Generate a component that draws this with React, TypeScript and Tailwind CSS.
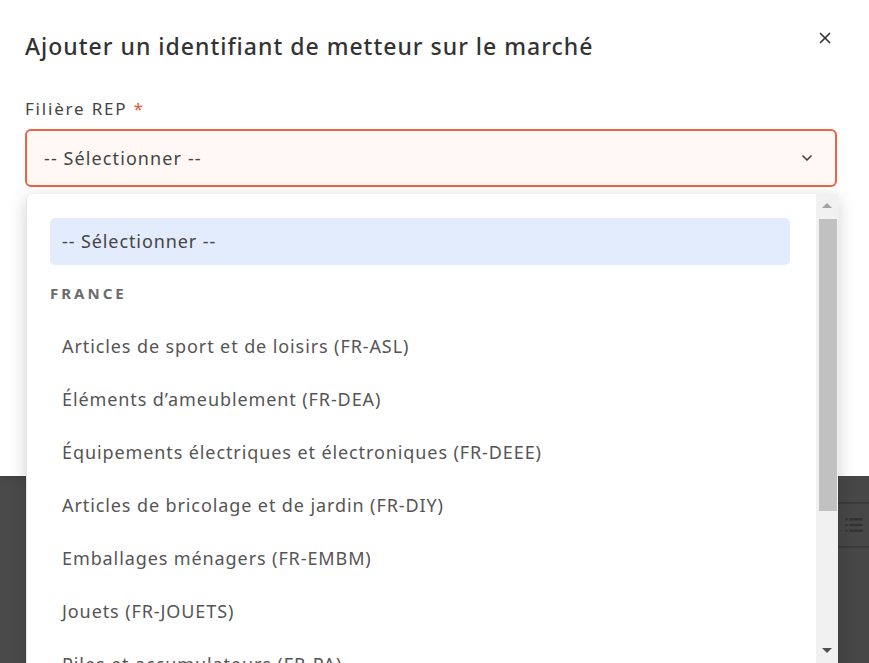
import { ChevronDown, X, List } from "lucide-react";

const options = [
  "Articles de sport et de loisirs (FR-ASL)",
  "Éléments d’ameublement (FR-DEA)",
  "Équipements électriques et électroniques (FR-DEEE)",
  "Articles de bricolage et de jardin (FR-DIY)",
  "Emballages ménagers (FR-EMBM)",
  "Jouets (FR-JOUETS)",
  "Piles et accumulateurs (FR-PA)",
];

export default function App() {
  return (
    <div className="relative h-[663px] w-[869px] overflow-hidden bg-[#4a4a4a] font-['Noto_Sans',sans-serif]">
      {/* modal */}
      <div className="h-[476px] bg-white px-[25px] pt-[30px] shadow-md">
        <div className="flex items-start justify-between">
          <h2 className="text-[23px] leading-[32px] font-medium tracking-[1px] text-[#333]">Ajouter un identifiant de metteur sur le marché</h2>
          <button className="mr-[10px] -mt-[1px] text-[#333]">
            <X size={18} strokeWidth={2.2} />
          </button>
        </div>
        <label className="mt-[35px] block text-[17px] leading-[24px] tracking-[1.8px] text-[#444]">
          Filière REP <span className="text-[#e8553a]">*</span>
        </label>
        <div className="mt-[8px] mr-[7px] flex h-[58px] items-center justify-between rounded-[6px] border-2 border-[#ea6445] bg-[#fff8f5] pl-[17px] pr-[20px]">
          <span className="text-[18px] tracking-[1.1px] text-[#444]">-- Sélectionner --</span>
          <ChevronDown size={16} strokeWidth={2.6} className="text-[#444]" />
        </div>
      </div>

      {/* page behind backdrop */}
      <div className="absolute right-0 top-[476px] h-[187px] w-[31px] bg-[#474747]">
        <div className="h-[28px] border-b-2 border-[#3b3b3b]" />
        <div className="flex h-[44px] items-center border-b-2 border-[#3b3b3b] pl-[6px] text-[#333]">
          <List size={20} strokeWidth={3} />
        </div>
      </div>

      {/* dropdown list */}
      <div className="absolute left-[26px] top-[194px] flex h-[500px] w-[812px] rounded-t-[6px] border-l border-[#e5e5e5] bg-white shadow-[0_4px_18px_rgba(0,0,0,0.18)]">
        <div className="flex-1 pl-[23px] pr-[26px] pt-[24px]">
          <div className="flex h-[47px] items-center rounded-[5px] bg-[#e3ecfd] px-[12px] text-[18px] tracking-[0.9px] text-[#444]">
            -- Sélectionner --
          </div>
          <div className="mt-[17px] text-[15px] font-bold tracking-[3px] text-[#6b6b6b]">FRANCE</div>
          <ul className="mt-[15px]">
            {options.map((o) => (
              <li key={o} className="flex h-[53px] items-center px-[12px] text-[18px] tracking-[0.9px] text-[#555]">
                {o}
              </li>
            ))}
          </ul>
        </div>
        <div className="relative w-[22px] bg-[#f1f1f1]">
          <div className="absolute left-1/2 top-[9px] h-0 w-0 -translate-x-1/2 border-x-[5px] border-b-[5px] border-x-transparent border-b-[#a3a3a3]" />
          <div className="absolute left-[3px] right-[1px] top-[25px] h-[292px] bg-[#c1c1c1]" />
          <div className="absolute left-1/2 top-[454px] h-0 w-0 -translate-x-1/2 border-x-[5px] border-t-[5px] border-x-transparent border-t-[#505050]" />
        </div>
      </div>
    </div>
  );
}
